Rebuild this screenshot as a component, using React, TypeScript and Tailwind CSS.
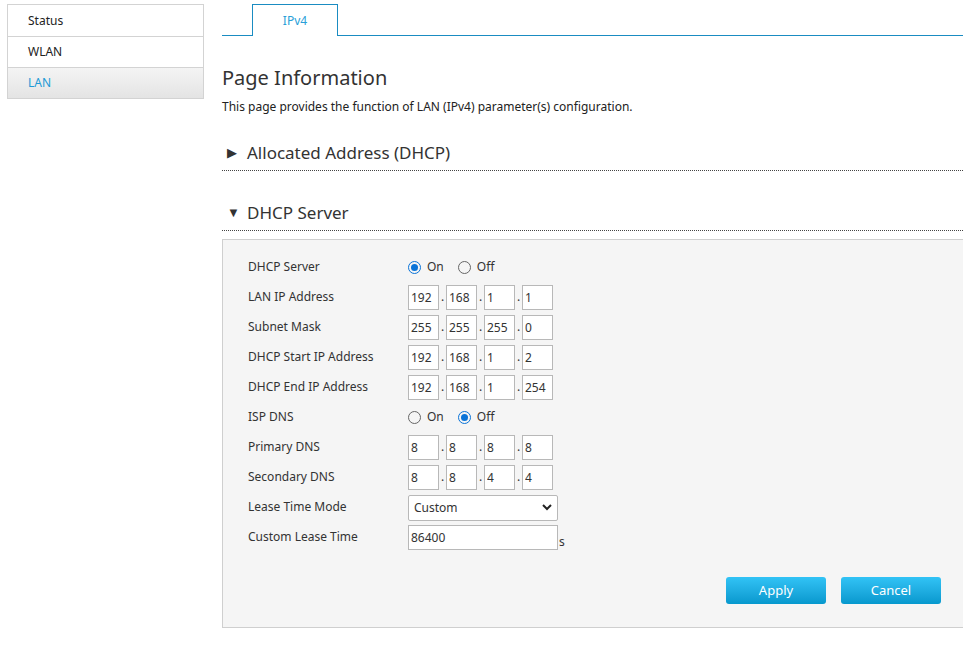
import React, { useState } from "react";

const font = { fontFamily: '"Noto Sans", "Open Sans", Arial, sans-serif' };

function Sidebar() {
	const items = ["Status", "WLAN", "LAN"];
	return (
		<div className="mt-[4px] ml-[7px] w-[197px] shrink-0 self-start border border-[#d3d3d3]">
			{items.map((it, i) => (
				<div
					key={it}
					className={
						"flex h-[31px] items-center pl-[20px] text-[12px] " +
						(i > 0 ? "border-t border-[#d3d3d3] " : "") +
						(it === "LAN"
							? "bg-gradient-to-b from-[#f4f4f4] to-[#e4e4e4] text-[#1c9ad6]"
							: "bg-white text-[#222]")
					}
				>
					{it}
				</div>
			))}
		</div>
	);
}

function Octets({ values }: { values: string[] }) {
	return (
		<div className="flex items-center">
			{values.map((v, i) => (
				<React.Fragment key={i}>
					{i > 0 && <span className="w-[7px] text-center text-[12px] text-[#333]">.</span>}
					<input
						defaultValue={v}
						className="h-[25px] w-[31px] border border-[#b8b8b8] bg-white px-[2px] text-[12px] text-[#333] outline-none"
					/>
				</React.Fragment>
			))}
		</div>
	);
}

function Radio({ on }: { on: boolean }) {
	return (
		<div className="flex items-center text-[12px] text-[#333]">
			<span
				className={
					"flex h-[13px] w-[13px] items-center justify-center rounded-full border " +
					(on ? "border-[#0a74d8]" : "border-[#666]")
				}
			>
				{on && <span className="h-[7px] w-[7px] rounded-full bg-[#0a74d8]" />}
			</span>
			<span className="ml-[6px]">On</span>
			<span
				className={
					"ml-[14px] flex h-[13px] w-[13px] items-center justify-center rounded-full border " +
					(!on ? "border-[#0a74d8]" : "border-[#666]")
				}
			>
				{!on && <span className="h-[7px] w-[7px] rounded-full bg-[#0a74d8]" />}
			</span>
			<span className="ml-[6px]">Off</span>
		</div>
	);
}

function Row({ label, children }: { label: string; children: React.ReactNode }) {
	return (
		<div className="flex h-[30px] items-center">
			<div className="w-[160px] text-[12px] text-[#333]">{label}</div>
			{children}
		</div>
	);
}

function Section({ title, open }: { title: string; open: boolean }) {
	return (
		<div className="flex h-[38px] items-center border-b border-dotted border-[#444] pl-[5px] pt-[2px]">
			<span className="w-[20px] text-[13px] leading-none text-[#333]">{open ? "▼" : "▶"}</span>
			<span className="text-[17px] text-[#333]">{title}</span>
		</div>
	);
}

export default function App() {
	const [mode, setMode] = useState("Custom");
	return (
		<div className="flex h-[649px] w-[963px] overflow-hidden bg-white" style={font}>
			<Sidebar />
			<div className="ml-[18px] w-[745px] shrink-0">
				{/* tabs */}
				<div className="mt-[4px] flex h-[32px] border-b border-[#1a8cc2]">
					<div className="ml-[30px] flex h-[32px] w-[86px] items-center justify-center border border-b-0 border-[#1a8cc2] bg-white text-[12px] text-[#2a9fd8]">
						IPv4
					</div>
				</div>

				<div className="mt-[30px] text-[20px] leading-[24px] text-[#333]">Page Information</div>
				<div className="mt-[9px] text-[12px] leading-[16px] text-[#222]">
					This page provides the function of LAN (IPv4) parameter(s) configuration.
				</div>

				<div className="mt-[18px]">
					<Section title="Allocated Address (DHCP)" open={false} />
				</div>
				<div className="mt-[22px]">
					<Section title="DHCP Server" open={true} />
				</div>

				<div className="mt-[8px] border border-[#cfcfcf] bg-[#f5f5f5] pb-[23px] pl-[25px] pr-[25px] pt-[12px]">
					<Row label="DHCP Server">
						<Radio on={true} />
					</Row>
					<Row label="LAN IP Address">
						<Octets values={["192", "168", "1", "1"]} />
					</Row>
					<Row label="Subnet Mask">
						<Octets values={["255", "255", "255", "0"]} />
					</Row>
					<Row label="DHCP Start IP Address">
						<Octets values={["192", "168", "1", "2"]} />
					</Row>
					<Row label="DHCP End IP Address">
						<Octets values={["192", "168", "1", "254"]} />
					</Row>
					<Row label="ISP DNS">
						<Radio on={false} />
					</Row>
					<Row label="Primary DNS">
						<Octets values={["8", "8", "8", "8"]} />
					</Row>
					<Row label="Secondary DNS">
						<Octets values={["8", "8", "4", "4"]} />
					</Row>
					<Row label="Lease Time Mode">
						<div className="relative">
							<select
								value={mode}
								onChange={(e) => setMode(e.target.value)}
								className="h-[26px] w-[150px] appearance-none rounded-[2px] border border-[#b8b8b8] bg-white pl-[5px] text-[12px] text-[#333] outline-none"
							>
								<option>Custom</option>
								<option>Default</option>
							</select>
							<svg
								className="pointer-events-none absolute right-[6px] top-[9px]"
								width="10"
								height="8"
								viewBox="0 0 10 8"
							>
								<path d="M1 2 L5 6 L9 2" fill="none" stroke="#222" strokeWidth="2" />
							</svg>
						</div>
					</Row>
					<Row label="Custom Lease Time">
						<div className="flex items-end">
							<input
								defaultValue="86400"
								className="h-[25px] w-[150px] border border-[#b8b8b8] bg-white px-[2px] text-[12px] text-[#333] outline-none"
							/>
							<span className="ml-[1px] text-[12px] leading-[16px] text-[#333]">s</span>
						</div>
					</Row>

					<div className="mt-[25px] flex justify-end gap-[15px] pr-0">
						<button className="h-[27px] w-[100px] rounded-[3px] bg-gradient-to-b from-[#31c3f6] to-[#0598cd] text-[13px] text-white">
							Apply
						</button>
						<button className="h-[27px] w-[100px] rounded-[3px] bg-gradient-to-b from-[#31c3f6] to-[#0598cd] text-[13px] text-white">
							Cancel
						</button>
					</div>
				</div>
			</div>
		</div>
	);
}
